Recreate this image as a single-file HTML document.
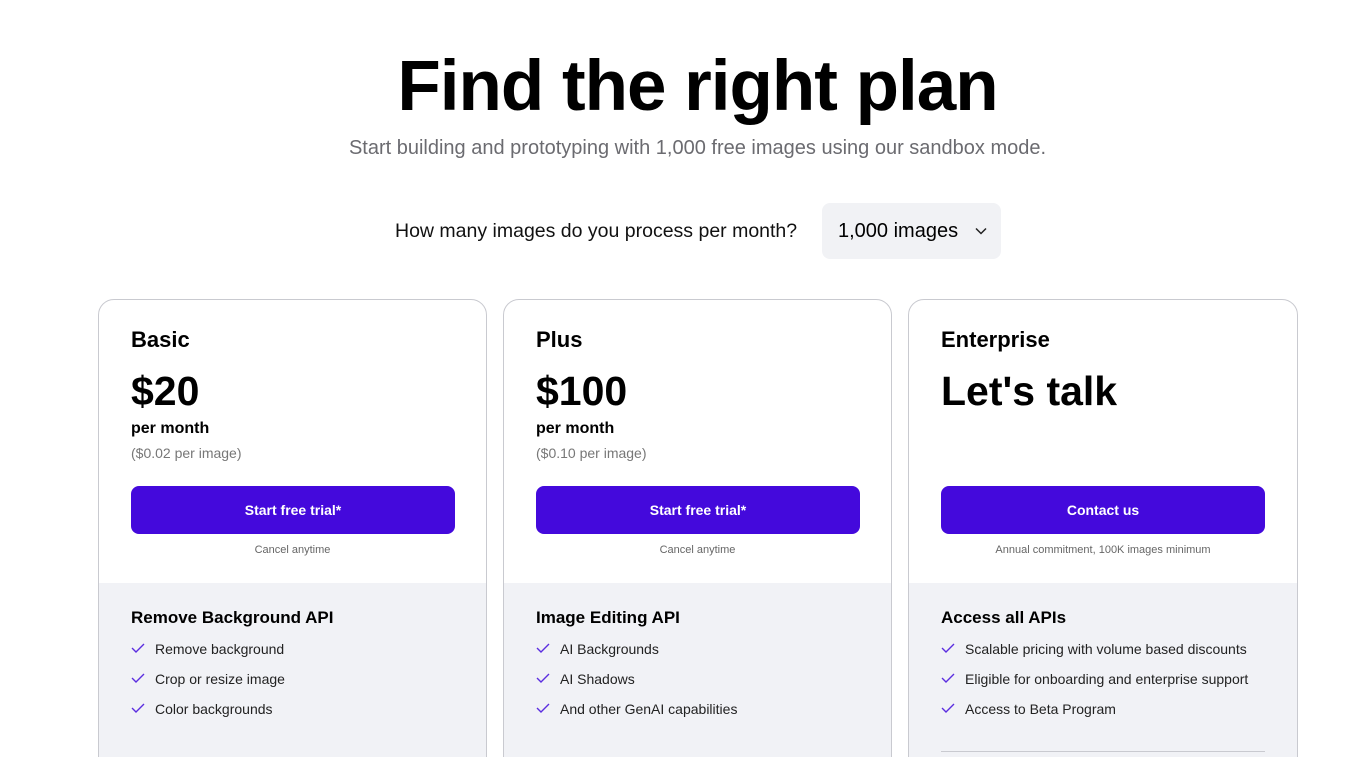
<!DOCTYPE html>
<html><head><style>
*{margin:0;padding:0;box-sizing:border-box}
html,body{width:1345px;height:757px;overflow:hidden}
body{background:#fff;font-family:"Liberation Sans",sans-serif;color:#000;position:relative}
.abs{position:absolute}
h1{position:absolute;left:0;width:1395px;top:46px;text-align:center;font-size:71px;font-weight:bold;letter-spacing:-1px}
.sub{left:0;width:1395px;top:137px;text-align:center;font-size:20px;color:#6b6b70}
.q{left:395px;top:220px;font-size:19.5px;color:#111}
.dd{left:822px;top:203px;width:179px;height:56px;background:#f1f2f5;border-radius:8px;font-size:20px;padding:17px 0 0 16px}
.dd svg{position:absolute;right:14px;top:24px}
.card{top:299px;width:389px;height:480px;border:1px solid #c9cad0;border-radius:16px;overflow:hidden;background:#fff}
.gray{position:absolute;left:0;right:0;top:283px;bottom:0;background:#f1f2f6}
.name{position:absolute;left:32px;top:27px;font-size:22px;font-weight:bold}
.price{position:absolute;left:32px;top:68px;font-size:41px;font-weight:bold}
.pm{position:absolute;left:32px;top:120px;font-size:16px;font-weight:bold}
.pi{position:absolute;left:32px;top:145px;font-size:14px;color:#777}
.btn{position:absolute;left:32px;top:186px;width:324px;height:48px;background:#4409dc;border-radius:8px;color:#fff;font-weight:bold;font-size:14px;text-align:center;line-height:48px}
.note{position:absolute;left:0;right:0;top:244px;text-align:center;font-size:11px;color:#666}
.ft{position:absolute;left:32px;top:308px;font-size:17px;font-weight:bold}
ul{position:absolute;left:32px;top:341px;list-style:none}
li{height:30px;font-size:14px;color:#222;padding-left:24px;position:relative}
li svg{position:absolute;left:0;top:1px}
.hr{position:absolute;left:32px;width:324px;top:451px;height:1px;background:#c9cad0}
</style></head><body>
<h1>Find the right plan</h1>
<div class="abs sub">Start building and prototyping with 1,000 free images using our sandbox mode.</div>
<div class="abs q">How many images do you process per month?</div>
<div class="abs dd">1,000 images<svg width="12" height="8" viewBox="0 0 12 8"><path d="M1 1.5l5 5 5-5" fill="none" stroke="#222" stroke-width="1.5"/></svg></div>

<div class="abs card" style="left:98px">
<div class="gray"></div>
<div class="name">Basic</div><div class="price">$20</div><div class="pm">per month</div><div class="pi">($0.02 per image)</div>
<div class="btn">Start free trial*</div><div class="note">Cancel anytime</div>
<div class="ft">Remove Background API</div>
<ul><li><svg width="14" height="12" viewBox="0 0 14 12"><path d="M1 6l4 4 8-8" fill="none" stroke="#5b2ee0" stroke-width="1.4"/></svg>Remove background</li>
<li><svg width="14" height="12" viewBox="0 0 14 12"><path d="M1 6l4 4 8-8" fill="none" stroke="#5b2ee0" stroke-width="1.4"/></svg>Crop or resize image</li>
<li><svg width="14" height="12" viewBox="0 0 14 12"><path d="M1 6l4 4 8-8" fill="none" stroke="#5b2ee0" stroke-width="1.4"/></svg>Color backgrounds</li></ul>
</div>

<div class="abs card" style="left:503px">
<div class="gray"></div>
<div class="name">Plus</div><div class="price">$100</div><div class="pm">per month</div><div class="pi">($0.10 per image)</div>
<div class="btn">Start free trial*</div><div class="note">Cancel anytime</div>
<div class="ft">Image Editing API</div>
<ul><li><svg width="14" height="12" viewBox="0 0 14 12"><path d="M1 6l4 4 8-8" fill="none" stroke="#5b2ee0" stroke-width="1.4"/></svg>AI Backgrounds</li>
<li><svg width="14" height="12" viewBox="0 0 14 12"><path d="M1 6l4 4 8-8" fill="none" stroke="#5b2ee0" stroke-width="1.4"/></svg>AI Shadows</li>
<li><svg width="14" height="12" viewBox="0 0 14 12"><path d="M1 6l4 4 8-8" fill="none" stroke="#5b2ee0" stroke-width="1.4"/></svg>And other GenAI capabilities</li></ul>
</div>

<div class="abs card" style="left:908px;width:390px">
<div class="gray"></div>
<div class="name">Enterprise</div><div class="price">Let's talk</div>
<div class="btn">Contact us</div><div class="note">Annual commitment, 100K images minimum</div>
<div class="ft">Access all APIs</div>
<ul><li><svg width="14" height="12" viewBox="0 0 14 12"><path d="M1 6l4 4 8-8" fill="none" stroke="#5b2ee0" stroke-width="1.4"/></svg>Scalable pricing with volume based discounts</li>
<li><svg width="14" height="12" viewBox="0 0 14 12"><path d="M1 6l4 4 8-8" fill="none" stroke="#5b2ee0" stroke-width="1.4"/></svg>Eligible for onboarding and enterprise support</li>
<li><svg width="14" height="12" viewBox="0 0 14 12"><path d="M1 6l4 4 8-8" fill="none" stroke="#5b2ee0" stroke-width="1.4"/></svg>Access to Beta Program</li></ul>
<div class="hr"></div>
</div>
</body></html>
